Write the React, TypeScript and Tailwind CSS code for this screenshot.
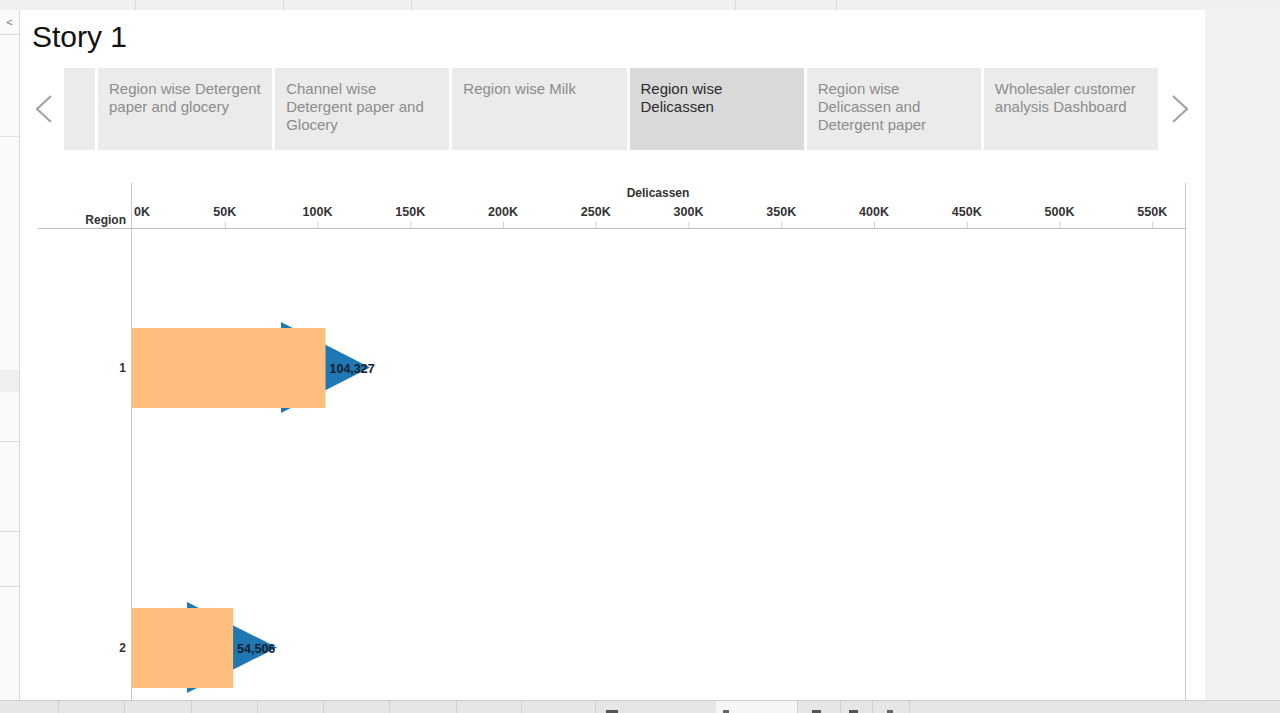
import React from "react";

const tabs = [
  { label: "", w: "w-[31px] flex-none", active: false },
  { label: "Region wise Detergent paper and glocery", active: false },
  { label: "Channel wise Detergent paper and Glocery", active: false },
  { label: "Region wise Milk", active: false },
  { label: "Region wise Delicassen", active: true },
  { label: "Region wise Delicassen and Detergent paper", active: false },
  { label: "Wholesaler customer analysis Dashboard", active: false },
];

const ticks = ["0K", "50K", "100K", "150K", "200K", "250K", "300K", "350K", "400K", "450K", "500K", "550K"];
const X0 = 132;
const STEP = 92.75;

function Chevron({ dir }: { dir: "left" | "right" }) {
  return (
    <svg width="18" height="28" viewBox="0 0 18 28" className="block">
      {dir === "left" ? (
        <polyline points="16,1 2,14 16,27" fill="none" stroke="#a3a3a3" strokeWidth="2.2" />
      ) : (
        <polyline points="2,1 16,14 2,27" fill="none" stroke="#a3a3a3" strokeWidth="2.2" />
      )}
    </svg>
  );
}

function Chart() {
  const rows = [
    { label: "1", value: 104327, text: "104,327", cy: 368, triBase: 281, triTip: 370 },
    { label: "2", value: 54506, text: "54,506", cy: 648, triBase: 187, triTip: 277 },
  ];
  const font = "'Liberation Sans', Arial, sans-serif";
  return (
    <svg width="1185" height="517" viewBox="20 183 1185 517" className="block">
      <line x1="131.5" y1="183" x2="131.5" y2="700" stroke="#c9c9c9" strokeWidth="1" />
      <line x1="1185.5" y1="183" x2="1185.5" y2="700" stroke="#c9c9c9" strokeWidth="1" />
      <line x1="38" y1="228.5" x2="1186" y2="228.5" stroke="#bdbdbd" strokeWidth="1" />
      <text x="658" y="197" textAnchor="middle" fontFamily={font} fontWeight="700" fontSize="12" fill="#333">
        Delicassen
      </text>
      <text x="126" y="224" textAnchor="end" fontFamily={font} fontWeight="700" fontSize="12" fill="#333">
        Region
      </text>
      {ticks.map((t, i) => {
        const x = X0 + i * STEP;
        return (
          <g key={t}>
            {i > 0 && <line x1={x + 0.5} y1="222" x2={x + 0.5} y2="228" stroke="#cfcfcf" strokeWidth="1" />}
            <text
              x={i === 0 ? 134 : x}
              y="216"
              textAnchor={i === 0 ? "start" : "middle"}
              fontFamily={font}
              fontWeight="700"
              fontSize="12.5"
              fill="#333"
            >
              {t}
            </text>
          </g>
        );
      })}
      {rows.map((r) => {
        const w = (r.value / 50000) * STEP;
        return (
          <g key={r.label}>
            <text x="126" y={r.cy + 4} textAnchor="end" fontFamily={font} fontWeight="700" fontSize="12" fill="#333">
              {r.label}
            </text>
            <polygon
              points={`${r.triBase},${r.cy - 46} ${r.triBase},${r.cy + 45} ${r.triTip},${r.cy - 0.5}`}
              fill="#1f77b4"
            />
            <rect x={X0} y={r.cy - 40} width={w} height="80" fill="#ffbe7d" />
            <text x={X0 + w + 4} y={r.cy + 4.5} fontFamily={font} fontWeight="700" fontSize="12.5" fill="#13202c">
              {r.text}
            </text>
          </g>
        );
      })}
    </svg>
  );
}

export default function App() {
  return (
    <div className="w-[1280px] h-[713px] overflow-hidden flex flex-col bg-[#f2f2f2] font-['Liberation_Sans',Arial,sans-serif]">
      {/* top strip */}
      <div className="h-[10px] flex flex-none bg-[#f0f0f0]">
        <div className="w-[136px] border-r border-[#dadada]" />
        <div className="w-[148px] border-r border-[#dadada]" />
        <div className="w-[128px] border-r border-[#dadada]" />
        <div className="w-[324px] border-r border-[#dadada]" />
        <div className="w-[101px] border-r border-[#dadada]" />
      </div>

      <div className="flex flex-1 min-h-0">
        {/* left sidebar */}
        <div className="w-[20px] flex-none flex flex-col bg-[#fafafa] border-r border-[#d9d9d9]">
          <div className="h-[25px] border-b border-[#dcdcdc] flex items-center justify-center text-[#777] text-[11px] leading-none">
            &lt;
          </div>
          <div className="h-[102px] border-b border-[#e0e0e0]" />
          <div className="h-[233px]" />
          <div className="h-[22px] bg-[#efefef]" />
          <div className="h-[50px] border-b border-[#dcdcdc]" />
          <div className="h-[90px] border-b border-[#dcdcdc]" />
          <div className="h-[55px] border-b border-[#dcdcdc]" />
          <div className="flex-1" />
        </div>

        {/* main story panel */}
        <div className="w-[1185px] flex-none bg-white flex flex-col">
          <div className="mt-[12px] pl-[12px] h-[30px] text-[30px] leading-[30px] text-[#111]">Story 1</div>

          <div className="mt-[16px] h-[82px] flex">
            <div className="w-[44px] flex-none flex items-center pl-[15px]">
              <Chevron dir="left" />
            </div>
            <div className="w-[1094px] flex-none flex gap-[3px]">
              {tabs.map((t, i) => (
                <div
                  key={i}
                  className={`${t.w ?? "flex-1 min-w-0"} ${
                    t.active ? "bg-[#d9d9d9] text-[#2b2b2b]" : "bg-[#ebebeb] text-[#8c8c8c]"
                  } pl-[11px] pr-[8px] pt-[12px] text-[15px] leading-[18px]`}
                >
                  {t.label}
                </div>
              ))}
            </div>
            <div className="flex-1 flex items-center pl-[13px]">
              <Chevron dir="right" />
            </div>
          </div>

          <div className="mt-[33px]">
            <Chart />
          </div>
        </div>
        <div className="flex-1" />
      </div>

      {/* bottom bar */}
      <div className="h-[13px] flex-none flex bg-[#e6e6e6] border-t border-[#cdcdcd]">
        {[59, 66, 67, 66, 66, 66, 67, 65, 74].map((w, i) => (
          <div key={i} style={{ width: w }} className="border-r border-[#d2d2d2]" />
        ))}
        <div className="w-[120px] flex items-end pl-[10px]">
          <div className="w-[12px] h-[3px] bg-[#555]" />
        </div>
        <div className="w-[82px] bg-[#f6f6f6] flex items-end pl-[7px] border-r border-[#d2d2d2]">
          <div className="w-[6px] h-[3px] bg-[#666]" />
        </div>
        <div className="w-[43px] flex items-end pl-[14px] border-r border-[#d2d2d2]">
          <div className="w-[9px] h-[3px] bg-[#555]" />
        </div>
        <div className="w-[32px] flex items-end pl-[8px] border-r border-[#d2d2d2]">
          <div className="w-[9px] h-[3px] bg-[#555]" />
        </div>
        <div className="w-[37px] flex items-end pl-[14px] border-r border-[#d2d2d2]">
          <div className="w-[6px] h-[3px] bg-[#666]" />
        </div>
        <div className="flex-1" />
      </div>
    </div>
  );
}
